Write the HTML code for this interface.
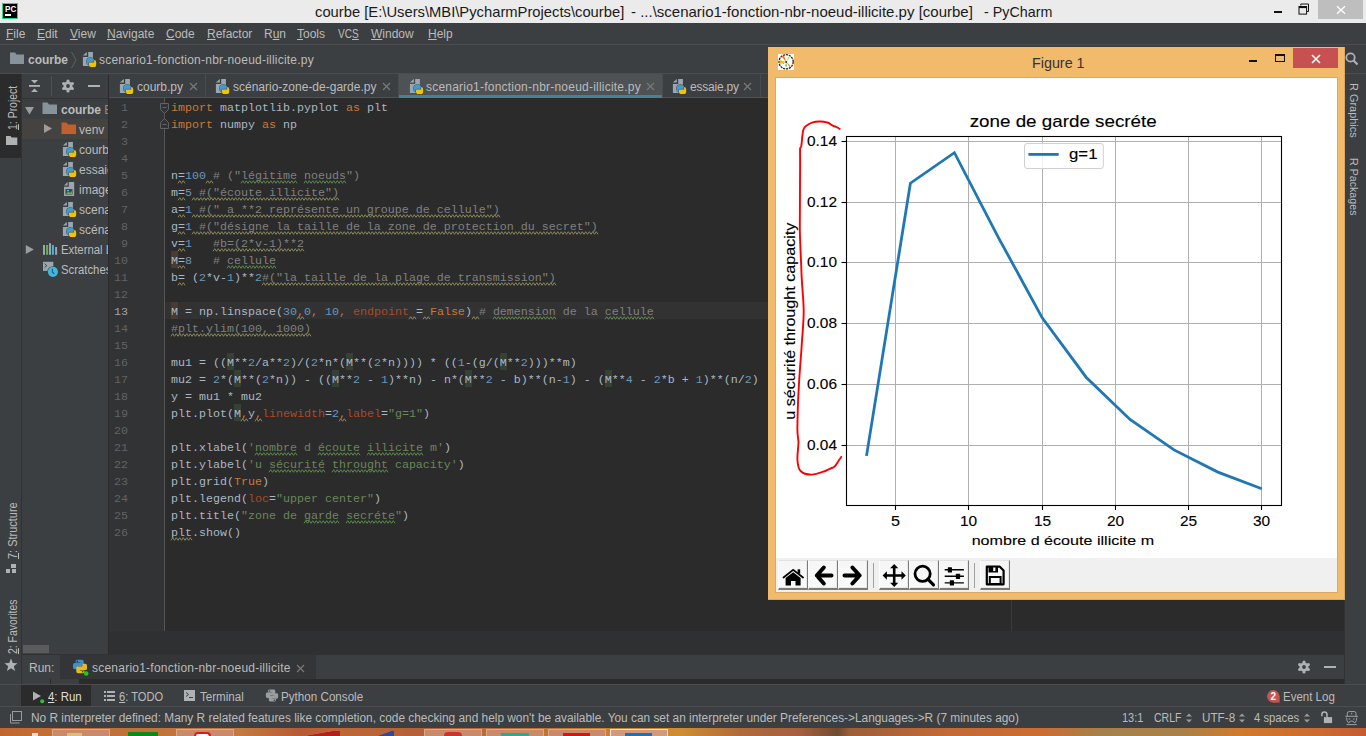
<!DOCTYPE html>
<html><head><meta charset="utf-8">
<style>
*{box-sizing:border-box}
html,body{margin:0;padding:0}
body{width:1366px;height:736px;overflow:hidden;position:relative;background:#3c3f41;font-family:"Liberation Sans",sans-serif;color:#bbbbbb}
.a{position:absolute}
.t{position:absolute;white-space:pre;line-height:16px;font-size:12px}
.u{text-decoration:underline}
#code{position:absolute;left:171px;top:100px;font-family:"Liberation Mono",monospace;font-size:11.667px;line-height:17px;white-space:pre;color:#a9b7c6}
#code div{height:17px}
.k{color:#cc7832}.n{color:#6897bb}.s{color:#6a8759}.c{color:#808080}.p{color:#aa4926}.m{background:#344134}
.w{}
.y{}
#lnum{position:absolute;left:109px;top:100px;width:19px;font-family:"Liberation Mono",monospace;font-size:11.667px;line-height:17px;white-space:pre;color:#606366;text-align:right}
#lnum div{height:17px}
.btn{position:absolute;top:560px;width:30px;height:30px;background:linear-gradient(#f6f6f6,#f9f9f9);border-top:1px solid #e2e2e2;border-left:1px solid #fcfcfc;border-right:1px solid #7a7a7a;border-bottom:2px solid #7a7a7a;box-shadow:inset -1px -1px 0 #e8e8e8}
svg text{font-family:"Liberation Sans",sans-serif;fill:#000}
</style></head><body>

<!-- Title bar -->
<div class="a" style="left:0;top:0;width:1366px;height:23px;background:#ebebeb"></div>
<div class="a" style="left:2px;top:3px;width:16px;height:16px;background:#000;border:1px solid #21d789"></div>
<div class="t" style="left:4.5px;top:4.5px;font-size:9px;font-weight:bold;color:#fff;line-height:9px;transform:scaleX(0.9);transform-origin:0 0">PC</div>
<div class="a" style="left:5px;top:14px;width:6px;height:1.5px;background:#fff"></div>
<div class="t" id="tA" style="left:315px;top:3px;transform:scaleX(0.984);transform-origin:0 0;font-size:15px;line-height:18px;color:#1a1a1a">courbe [E:\Users\MBI\PycharmProjects\courbe]</div>
<div class="t" id="tB" style="left:631px;top:3px;font-size:15px;line-height:18px;color:#1a1a1a">- ...\scenario1-fonction-nbr-noeud-illicite.py [courbe]</div>
<div class="t" id="tC" style="left:983.5px;top:3px;transform:scaleX(0.953);transform-origin:0 0;font-size:15px;line-height:18px;color:#1a1a1a">- PyCharm</div>
<div class="a" style="left:1318px;top:0;width:45px;height:19px;background:#bebebe"></div>
<div class="a" style="left:1274px;top:11px;width:8px;height:2px;background:#111"></div>
<svg class="a" style="left:1298px;top:3px" width="12" height="12"><path d="M2.8 2.5 V1 H10.5 V8.5 H9" fill="none" stroke="#111" stroke-width="1"/><rect x="1" y="3.5" width="7.6" height="7.6" fill="#ebebeb" stroke="#111" stroke-width="1"/><rect x="1" y="3.5" width="7.6" height="1.6" fill="#111"/></svg>
<svg class="a" style="left:1336px;top:5px" width="10" height="10"><path d="M1 1.2L9 8.8M9 1.2L1 8.8" stroke="#fff" stroke-width="1.3"/></svg>

<!-- Menu bar -->
<div class="a" style="left:0;top:23px;width:1366px;height:21px;background:#3c3f41"></div>
<div class="a" style="left:0;top:44px;width:1366px;height:1px;background:#4a4c4e"></div>

<!-- Nav bar -->
<div class="a" style="left:0;top:45px;width:1366px;height:28px;background:#3c3f41"></div>
<div class="a" style="left:0;top:73px;width:1366px;height:1px;background:#4b4d4f"></div>

<!-- left strip -->
<div class="a" style="left:0;top:74px;width:21px;height:610px;background:#3c3f41"></div>
<div class="a" style="left:0;top:74px;width:21px;height:84px;background:#2b2b2b"></div>
<div class="a" style="left:21px;top:74px;width:1px;height:610px;background:#323232"></div>

<!-- Project panel -->
<div class="a" style="left:22px;top:74px;width:86px;height:580px;background:#3c3f41"></div>
<div class="a" style="left:22px;top:98px;width:86px;height:1px;background:#323232"></div>
<div class="a" style="left:22px;top:119px;width:86px;height:20px;background:#45433f"></div>
<div class="a" style="left:108px;top:74px;width:1px;height:580px;background:#2b2b2b"></div>

<!-- Editor tabs -->
<div class="a" style="left:109px;top:74px;width:1257px;height:23px;background:#3c3f41"></div>
<div class="a" style="left:109px;top:97px;width:1257px;height:1px;background:#515151"></div>

<!-- Editor -->
<div class="a" style="left:109px;top:98px;width:1235px;height:533px;background:#2b2b2b"></div>
<div class="a" style="left:109px;top:98px;width:55px;height:533px;background:#313335"></div>
<div class="a" style="left:164px;top:98px;width:1px;height:533px;background:#555555"></div>
<div class="a" style="left:165px;top:302px;width:1179px;height:17px;background:#323232"></div>
<div class="a" style="left:1011px;top:98px;width:1px;height:533px;background:#3b3b3b"></div>
<div class="a" style="left:109px;top:631px;width:1235px;height:24px;background:#2f3031"></div>

<!-- Right strip -->
<div class="a" style="left:1344px;top:74px;width:22px;height:610px;background:#3c3f41"></div>
<div class="a" style="left:1344px;top:74px;width:1px;height:610px;background:#323232"></div>

<!-- Run header -->
<div class="a" style="left:22px;top:655px;width:1322px;height:24px;background:#3c3f41"></div>
<div class="a" style="left:22px;top:679px;width:1322px;height:5px;background:#2b2b2b"></div>

<!-- bottom tool strip -->
<div class="a" style="left:0;top:684px;width:1366px;height:22px;background:#3c3f41"></div>
<div class="a" style="left:0;top:684px;width:1366px;height:1px;background:#4a4c4e"></div>
<div class="a" style="left:21px;top:685px;width:70px;height:21px;background:#2b2b2b"></div>

<!-- status bar -->
<div class="a" style="left:0;top:706px;width:1366px;height:23px;background:#3c3f41"></div>
<div class="a" style="left:0;top:706px;width:1366px;height:1px;background:#4b4d4f"></div>

<!-- taskbar -->
<div class="a" style="left:0;top:728px;width:1366px;height:8px;background:linear-gradient(90deg,#c0652d 0.00%,#c46e34 2.93%,#c07038 8.78%,#c27a40 17.57%,#b85a35 21.96%,#bf6634 24.89%,#b4603a 30.75%,#c27634 41.00%,#cf8d32 49.78%,#b06a3a 54.17%,#a55f40 58.57%,#6e4c30 61.35%,#9c5e3a 62.23%,#c46a36 69.55%,#cc6c30 76.13%,#a6804a 80.53%,#a8804a 86.38%,#d07a2c 90.78%,#cc6a30 96.63%,#c65a30 100.00%)"></div>
<div class="a" style="left:32px;top:733px;width:6px;height:3px;background:#e8e0d8"></div>
<div class="a" style="left:52px;top:729px;width:58px;height:7px;background:#c88a6a;border:1px solid #d8a88a;border-bottom:none"></div>
<div class="a" style="left:67px;top:733px;width:15px;height:3px;background:#d8c070"></div>
<div class="a" style="left:128px;top:732px;width:30px;height:4px;background:#0a8a1a"></div>
<div class="a" style="left:176px;top:729px;width:58px;height:7px;background:#c88a6a;border:1px solid #d8a88a;border-bottom:none"></div>
<div class="a" style="left:194px;top:732px;width:17px;height:4px;border-radius:8px 8px 0 0;background:#fff;border:2px solid #d02020;border-bottom:none"></div>
<div class="a" style="left:308px;top:731px;width:32px;height:5px;background:linear-gradient(170deg,transparent 40%,#b02020 45%)"></div>
<div class="a" style="left:377px;top:731px;width:17px;height:5px;background:linear-gradient(160deg,transparent 45%,#2a4aa0 50%)"></div>
<div class="a" style="left:424px;top:729px;width:58px;height:7px;background:#c88a6a;border:1px solid #d8a88a;border-bottom:none"></div>
<div class="a" style="left:444px;top:732px;width:18px;height:4px;border-radius:9px 9px 0 0;background:#d03030"></div>
<div class="a" style="left:486px;top:729px;width:58px;height:7px;background:#c88a6a;border:1px solid #d8a88a;border-bottom:none"></div>
<div class="a" style="left:501px;top:733px;width:28px;height:3px;background:#20b090"></div>
<div class="a" style="left:548px;top:729px;width:58px;height:7px;background:#c88a6a;border:1px solid #d8a88a;border-bottom:none"></div>
<div class="a" style="left:563px;top:733px;width:27px;height:3px;background:#e01010"></div>
<div class="a" style="left:610px;top:729px;width:58px;height:7px;background:#d09a7e;border:1px solid #f2e6dc;border-bottom:none"></div>
<div class="a" style="left:625px;top:733px;width:27px;height:3px;background:#1a70c8"></div>

<div class="a" style="left:227px;top:353px;width:7px;height:17px;background:#344134"></div>
<div class="a" style="left:346px;top:353px;width:7px;height:17px;background:#344134"></div>
<div class="a" style="left:500px;top:353px;width:7px;height:17px;background:#344134"></div>
<div class="a" style="left:234px;top:370px;width:7px;height:17px;background:#344134"></div>
<div class="a" style="left:332px;top:370px;width:7px;height:17px;background:#344134"></div>
<div class="a" style="left:465px;top:370px;width:7px;height:17px;background:#344134"></div>
<div class="a" style="left:605px;top:370px;width:7px;height:17px;background:#344134"></div>
<div class="a" style="left:234px;top:404px;width:7px;height:17px;background:#344134"></div>
<div class="a" style="left:171px;top:251px;width:7px;height:17px;background:#4b3a2f"></div>
<div class="a" style="left:171px;top:302px;width:7px;height:17px;background:#4b3a2f"></div>
<div id="lnum"><div>1</div><div>2</div><div>3</div><div>4</div><div>5</div><div>6</div><div>7</div><div>8</div><div>9</div><div>10</div><div>11</div><div>12</div><div style="color:#a4a3a3">13</div><div>14</div><div>15</div><div>16</div><div>17</div><div>18</div><div>19</div><div>20</div><div>21</div><div>22</div><div>23</div><div>24</div><div>25</div><div>26</div></div>
<div id="code"><div><span class="k">import</span> matplotlib.pyplot <span class="k">as</span> plt</div><div><span class="k">import</span> numpy <span class="k">as</span> np</div><div></div><div></div><div>n<span class="y">=</span><span class="n">100</span><span class="y"> </span><span class="c"># (&quot;<span class="w">légitime</span> <span class="w">noeuds</span>&quot;)</span></div><div>m<span class="y">=</span><span class="n">5</span><span class="c y"> #(&quot;écoute illicite&quot;)</span></div><div>a<span class="y">=</span><span class="n">1</span><span class="c y"> #(&quot; a **2 représente un groupe de cellule&quot;)</span></div><div>g<span class="y">=</span><span class="n">1</span><span class="c y"> #(&quot;désigne la taille de la zone de protection du secret&quot;)</span></div><div>v<span class="y">=</span><span class="n">1</span>   <span class="c y">#b=(2*v-1)**2</span></div><div>M<span class="y">=</span><span class="n">8</span>   <span class="c"># <span class="w">cellule</span></span></div><div>b<span class="y">=</span> (<span class="n">2</span>*v-<span class="n">1</span>)**<span class="n">2</span><span class="c y">#(&quot;la taille de la plage de transmission&quot;)</span></div><div></div><div>M = np.linspace(<span class="n">30</span><span class="k y">,</span><span class="n">0</span><span class="k">,</span> <span class="n">10</span><span class="k">,</span> <span class="p">endpoint</span><span class="y"> </span>=<span class="y"> </span><span class="k">False</span>)<span class="y"> </span><span class="c"># <span class="w">demension</span> de la <span class="w">cellule</span></span></div><div><span class="c y">#plt.ylim(100, 1000)</span></div><div></div><div>mu1 = ((M**<span class="n">2</span>/a**<span class="n">2</span>)/(<span class="n">2</span>*n*(M**(<span class="n">2</span>*n)))) * ((<span class="n">1</span>-(g/(M**<span class="n">2</span>)))**m)</div><div>mu2 = <span class="n">2</span>*(M**(<span class="n">2</span>*n)) - ((M**<span class="n">2</span> - <span class="n">1</span>)**n) - n*(M**<span class="n">2</span> - b)**(n-<span class="n">1</span>) - (M**<span class="n">4</span> - <span class="n">2</span>*b + <span class="n">1</span>)**(n/<span class="n">2</span>)</div><div>y = mu1 * mu2</div><div>plt.plot(M<span class="k y">,</span>y<span class="k y">,</span><span class="p">linewidth</span>=<span class="n">2</span><span class="k y">,</span><span class="p">label</span>=<span class="s">&quot;g=1&quot;</span>)</div><div></div><div>plt.xlabel(<span class="s">'<span class="w">nombre</span> d <span class="w">écoute</span> <span class="w">illicite</span> m'</span>)</div><div>plt.ylabel(<span class="s">'u <span class="w">sécurité</span> <span class="w">throught</span> capacity'</span>)</div><div>plt.grid(<span class="k">True</span>)</div><div>plt.legend(<span class="p">loc</span>=<span class="s">&quot;upper center&quot;</span>)</div><div>plt.title(<span class="s">&quot;zone de <span class="w">garde</span> <span class="w">secréte</span>&quot;</span>)</div><div><span class="y">plt</span>.show()</div></div>

<svg class="a" style="left:165px;top:98px" width="603" height="450" viewBox="165 98 603 450"><path d="M178 183.3 L179.75 180.7 L181.5 183.3 L183.25 180.7 L185.0 183.3 M178 200.3 L179.75 197.7 L181.5 200.3 L183.25 197.7 L185.0 200.3 M178 217.3 L179.75 214.7 L181.5 217.3 L183.25 214.7 L185.0 217.3 M178 234.3 L179.75 231.7 L181.5 234.3 L183.25 231.7 L185.0 234.3 M178 251.3 L179.75 248.7 L181.5 251.3 L183.25 248.7 L185.0 251.3 M178 268.3 L179.75 265.7 L181.5 268.3 L183.25 265.7 L185.0 268.3 M178 285.3 L179.75 282.7 L181.5 285.3 L183.25 282.7 L185.0 285.3 M206 183.3 L207.75 180.7 L209.5 183.3 L211.25 180.7 L213.0 183.3 M192 200.3 L193.75 197.7 L195.5 200.3 L197.25 197.7 L199.0 200.3 L200.75 197.7 L202.5 200.3 L204.25 197.7 L206.0 200.3 L207.75 197.7 L209.5 200.3 L211.25 197.7 L213.0 200.3 L214.75 197.7 L216.5 200.3 L218.25 197.7 L220.0 200.3 L221.75 197.7 L223.5 200.3 L225.25 197.7 L227.0 200.3 L228.75 197.7 L230.5 200.3 L232.25 197.7 L234.0 200.3 L235.75 197.7 L237.5 200.3 L239.25 197.7 L241.0 200.3 L242.75 197.7 L244.5 200.3 L246.25 197.7 L248.0 200.3 L249.75 197.7 L251.5 200.3 L253.25 197.7 L255.0 200.3 L256.75 197.7 L258.5 200.3 L260.25 197.7 L262.0 200.3 L263.75 197.7 L265.5 200.3 L267.25 197.7 L269.0 200.3 L270.75 197.7 L272.5 200.3 L274.25 197.7 L276.0 200.3 L277.75 197.7 L279.5 200.3 L281.25 197.7 L283.0 200.3 L284.75 197.7 L286.5 200.3 L288.25 197.7 L290.0 200.3 L291.75 197.7 L293.5 200.3 L295.25 197.7 L297.0 200.3 L298.75 197.7 L300.5 200.3 L302.25 197.7 L304.0 200.3 L305.75 197.7 L307.5 200.3 L309.25 197.7 L311.0 200.3 L312.75 197.7 L314.5 200.3 L316.25 197.7 L318.0 200.3 L319.75 197.7 L321.5 200.3 L323.25 197.7 L325.0 200.3 L326.75 197.7 L328.5 200.3 L330.25 197.7 L332.0 200.3 L333.75 197.7 L335.5 200.3 L337.25 197.7 L339.0 200.3 M192 217.3 L193.75 214.7 L195.5 217.3 L197.25 214.7 L199.0 217.3 L200.75 214.7 L202.5 217.3 L204.25 214.7 L206.0 217.3 L207.75 214.7 L209.5 217.3 L211.25 214.7 L213.0 217.3 L214.75 214.7 L216.5 217.3 L218.25 214.7 L220.0 217.3 L221.75 214.7 L223.5 217.3 L225.25 214.7 L227.0 217.3 L228.75 214.7 L230.5 217.3 L232.25 214.7 L234.0 217.3 L235.75 214.7 L237.5 217.3 L239.25 214.7 L241.0 217.3 L242.75 214.7 L244.5 217.3 L246.25 214.7 L248.0 217.3 L249.75 214.7 L251.5 217.3 L253.25 214.7 L255.0 217.3 L256.75 214.7 L258.5 217.3 L260.25 214.7 L262.0 217.3 L263.75 214.7 L265.5 217.3 L267.25 214.7 L269.0 217.3 L270.75 214.7 L272.5 217.3 L274.25 214.7 L276.0 217.3 L277.75 214.7 L279.5 217.3 L281.25 214.7 L283.0 217.3 L284.75 214.7 L286.5 217.3 L288.25 214.7 L290.0 217.3 L291.75 214.7 L293.5 217.3 L295.25 214.7 L297.0 217.3 L298.75 214.7 L300.5 217.3 L302.25 214.7 L304.0 217.3 L305.75 214.7 L307.5 217.3 L309.25 214.7 L311.0 217.3 L312.75 214.7 L314.5 217.3 L316.25 214.7 L318.0 217.3 L319.75 214.7 L321.5 217.3 L323.25 214.7 L325.0 217.3 L326.75 214.7 L328.5 217.3 L330.25 214.7 L332.0 217.3 L333.75 214.7 L335.5 217.3 L337.25 214.7 L339.0 217.3 L340.75 214.7 L342.5 217.3 L344.25 214.7 L346.0 217.3 L347.75 214.7 L349.5 217.3 L351.25 214.7 L353.0 217.3 L354.75 214.7 L356.5 217.3 L358.25 214.7 L360.0 217.3 L361.75 214.7 L363.5 217.3 L365.25 214.7 L367.0 217.3 L368.75 214.7 L370.5 217.3 L372.25 214.7 L374.0 217.3 L375.75 214.7 L377.5 217.3 L379.25 214.7 L381.0 217.3 L382.75 214.7 L384.5 217.3 L386.25 214.7 L388.0 217.3 L389.75 214.7 L391.5 217.3 L393.25 214.7 L395.0 217.3 L396.75 214.7 L398.5 217.3 L400.25 214.7 L402.0 217.3 L403.75 214.7 L405.5 217.3 L407.25 214.7 L409.0 217.3 L410.75 214.7 L412.5 217.3 L414.25 214.7 L416.0 217.3 L417.75 214.7 L419.5 217.3 L421.25 214.7 L423.0 217.3 L424.75 214.7 L426.5 217.3 L428.25 214.7 L430.0 217.3 L431.75 214.7 L433.5 217.3 L435.25 214.7 L437.0 217.3 L438.75 214.7 L440.5 217.3 L442.25 214.7 L444.0 217.3 L445.75 214.7 L447.5 217.3 L449.25 214.7 L451.0 217.3 L452.75 214.7 L454.5 217.3 L456.25 214.7 L458.0 217.3 L459.75 214.7 L461.5 217.3 L463.25 214.7 L465.0 217.3 L466.75 214.7 L468.5 217.3 L470.25 214.7 L472.0 217.3 L473.75 214.7 L475.5 217.3 L477.25 214.7 L479.0 217.3 L480.75 214.7 L482.5 217.3 L484.25 214.7 L486.0 217.3 L487.75 214.7 L489.5 217.3 L491.25 214.7 L493.0 217.3 L494.75 214.7 L496.5 217.3 L498.25 214.7 L500.0 217.3 M192 234.3 L193.75 231.7 L195.5 234.3 L197.25 231.7 L199.0 234.3 L200.75 231.7 L202.5 234.3 L204.25 231.7 L206.0 234.3 L207.75 231.7 L209.5 234.3 L211.25 231.7 L213.0 234.3 L214.75 231.7 L216.5 234.3 L218.25 231.7 L220.0 234.3 L221.75 231.7 L223.5 234.3 L225.25 231.7 L227.0 234.3 L228.75 231.7 L230.5 234.3 L232.25 231.7 L234.0 234.3 L235.75 231.7 L237.5 234.3 L239.25 231.7 L241.0 234.3 L242.75 231.7 L244.5 234.3 L246.25 231.7 L248.0 234.3 L249.75 231.7 L251.5 234.3 L253.25 231.7 L255.0 234.3 L256.75 231.7 L258.5 234.3 L260.25 231.7 L262.0 234.3 L263.75 231.7 L265.5 234.3 L267.25 231.7 L269.0 234.3 L270.75 231.7 L272.5 234.3 L274.25 231.7 L276.0 234.3 L277.75 231.7 L279.5 234.3 L281.25 231.7 L283.0 234.3 L284.75 231.7 L286.5 234.3 L288.25 231.7 L290.0 234.3 L291.75 231.7 L293.5 234.3 L295.25 231.7 L297.0 234.3 L298.75 231.7 L300.5 234.3 L302.25 231.7 L304.0 234.3 L305.75 231.7 L307.5 234.3 L309.25 231.7 L311.0 234.3 L312.75 231.7 L314.5 234.3 L316.25 231.7 L318.0 234.3 L319.75 231.7 L321.5 234.3 L323.25 231.7 L325.0 234.3 L326.75 231.7 L328.5 234.3 L330.25 231.7 L332.0 234.3 L333.75 231.7 L335.5 234.3 L337.25 231.7 L339.0 234.3 L340.75 231.7 L342.5 234.3 L344.25 231.7 L346.0 234.3 L347.75 231.7 L349.5 234.3 L351.25 231.7 L353.0 234.3 L354.75 231.7 L356.5 234.3 L358.25 231.7 L360.0 234.3 L361.75 231.7 L363.5 234.3 L365.25 231.7 L367.0 234.3 L368.75 231.7 L370.5 234.3 L372.25 231.7 L374.0 234.3 L375.75 231.7 L377.5 234.3 L379.25 231.7 L381.0 234.3 L382.75 231.7 L384.5 234.3 L386.25 231.7 L388.0 234.3 L389.75 231.7 L391.5 234.3 L393.25 231.7 L395.0 234.3 L396.75 231.7 L398.5 234.3 L400.25 231.7 L402.0 234.3 L403.75 231.7 L405.5 234.3 L407.25 231.7 L409.0 234.3 L410.75 231.7 L412.5 234.3 L414.25 231.7 L416.0 234.3 L417.75 231.7 L419.5 234.3 L421.25 231.7 L423.0 234.3 L424.75 231.7 L426.5 234.3 L428.25 231.7 L430.0 234.3 L431.75 231.7 L433.5 234.3 L435.25 231.7 L437.0 234.3 L438.75 231.7 L440.5 234.3 L442.25 231.7 L444.0 234.3 L445.75 231.7 L447.5 234.3 L449.25 231.7 L451.0 234.3 L452.75 231.7 L454.5 234.3 L456.25 231.7 L458.0 234.3 L459.75 231.7 L461.5 234.3 L463.25 231.7 L465.0 234.3 L466.75 231.7 L468.5 234.3 L470.25 231.7 L472.0 234.3 L473.75 231.7 L475.5 234.3 L477.25 231.7 L479.0 234.3 L480.75 231.7 L482.5 234.3 L484.25 231.7 L486.0 234.3 L487.75 231.7 L489.5 234.3 L491.25 231.7 L493.0 234.3 L494.75 231.7 L496.5 234.3 L498.25 231.7 L500.0 234.3 L501.75 231.7 L503.5 234.3 L505.25 231.7 L507.0 234.3 L508.75 231.7 L510.5 234.3 L512.25 231.7 L514.0 234.3 L515.75 231.7 L517.5 234.3 L519.25 231.7 L521.0 234.3 L522.75 231.7 L524.5 234.3 L526.25 231.7 L528.0 234.3 L529.75 231.7 L531.5 234.3 L533.25 231.7 L535.0 234.3 L536.75 231.7 L538.5 234.3 L540.25 231.7 L542.0 234.3 L543.75 231.7 L545.5 234.3 L547.25 231.7 L549.0 234.3 L550.75 231.7 L552.5 234.3 L554.25 231.7 L556.0 234.3 L557.75 231.7 L559.5 234.3 L561.25 231.7 L563.0 234.3 L564.75 231.7 L566.5 234.3 L568.25 231.7 L570.0 234.3 L571.75 231.7 L573.5 234.3 L575.25 231.7 L577.0 234.3 L578.75 231.7 L580.5 234.3 L582.25 231.7 L584.0 234.3 L585.75 231.7 L587.5 234.3 L589.25 231.7 L591.0 234.3 L592.75 231.7 L594.5 234.3 L596.25 231.7 L598.0 234.3 M213 251.3 L214.75 248.7 L216.5 251.3 L218.25 248.7 L220.0 251.3 L221.75 248.7 L223.5 251.3 L225.25 248.7 L227.0 251.3 L228.75 248.7 L230.5 251.3 L232.25 248.7 L234.0 251.3 L235.75 248.7 L237.5 251.3 L239.25 248.7 L241.0 251.3 L242.75 248.7 L244.5 251.3 L246.25 248.7 L248.0 251.3 L249.75 248.7 L251.5 251.3 L253.25 248.7 L255.0 251.3 L256.75 248.7 L258.5 251.3 L260.25 248.7 L262.0 251.3 L263.75 248.7 L265.5 251.3 L267.25 248.7 L269.0 251.3 L270.75 248.7 L272.5 251.3 L274.25 248.7 L276.0 251.3 L277.75 248.7 L279.5 251.3 L281.25 248.7 L283.0 251.3 L284.75 248.7 L286.5 251.3 L288.25 248.7 L290.0 251.3 L291.75 248.7 L293.5 251.3 L295.25 248.7 L297.0 251.3 L298.75 248.7 L300.5 251.3 L302.25 248.7 L304.0 251.3 M262 285.3 L263.75 282.7 L265.5 285.3 L267.25 282.7 L269.0 285.3 L270.75 282.7 L272.5 285.3 L274.25 282.7 L276.0 285.3 L277.75 282.7 L279.5 285.3 L281.25 282.7 L283.0 285.3 L284.75 282.7 L286.5 285.3 L288.25 282.7 L290.0 285.3 L291.75 282.7 L293.5 285.3 L295.25 282.7 L297.0 285.3 L298.75 282.7 L300.5 285.3 L302.25 282.7 L304.0 285.3 L305.75 282.7 L307.5 285.3 L309.25 282.7 L311.0 285.3 L312.75 282.7 L314.5 285.3 L316.25 282.7 L318.0 285.3 L319.75 282.7 L321.5 285.3 L323.25 282.7 L325.0 285.3 L326.75 282.7 L328.5 285.3 L330.25 282.7 L332.0 285.3 L333.75 282.7 L335.5 285.3 L337.25 282.7 L339.0 285.3 L340.75 282.7 L342.5 285.3 L344.25 282.7 L346.0 285.3 L347.75 282.7 L349.5 285.3 L351.25 282.7 L353.0 285.3 L354.75 282.7 L356.5 285.3 L358.25 282.7 L360.0 285.3 L361.75 282.7 L363.5 285.3 L365.25 282.7 L367.0 285.3 L368.75 282.7 L370.5 285.3 L372.25 282.7 L374.0 285.3 L375.75 282.7 L377.5 285.3 L379.25 282.7 L381.0 285.3 L382.75 282.7 L384.5 285.3 L386.25 282.7 L388.0 285.3 L389.75 282.7 L391.5 285.3 L393.25 282.7 L395.0 285.3 L396.75 282.7 L398.5 285.3 L400.25 282.7 L402.0 285.3 L403.75 282.7 L405.5 285.3 L407.25 282.7 L409.0 285.3 L410.75 282.7 L412.5 285.3 L414.25 282.7 L416.0 285.3 L417.75 282.7 L419.5 285.3 L421.25 282.7 L423.0 285.3 L424.75 282.7 L426.5 285.3 L428.25 282.7 L430.0 285.3 L431.75 282.7 L433.5 285.3 L435.25 282.7 L437.0 285.3 L438.75 282.7 L440.5 285.3 L442.25 282.7 L444.0 285.3 L445.75 282.7 L447.5 285.3 L449.25 282.7 L451.0 285.3 L452.75 282.7 L454.5 285.3 L456.25 282.7 L458.0 285.3 L459.75 282.7 L461.5 285.3 L463.25 282.7 L465.0 285.3 L466.75 282.7 L468.5 285.3 L470.25 282.7 L472.0 285.3 L473.75 282.7 L475.5 285.3 L477.25 282.7 L479.0 285.3 L480.75 282.7 L482.5 285.3 L484.25 282.7 L486.0 285.3 L487.75 282.7 L489.5 285.3 L491.25 282.7 L493.0 285.3 L494.75 282.7 L496.5 285.3 L498.25 282.7 L500.0 285.3 L501.75 282.7 L503.5 285.3 L505.25 282.7 L507.0 285.3 L508.75 282.7 L510.5 285.3 L512.25 282.7 L514.0 285.3 L515.75 282.7 L517.5 285.3 L519.25 282.7 L521.0 285.3 L522.75 282.7 L524.5 285.3 L526.25 282.7 L528.0 285.3 L529.75 282.7 L531.5 285.3 L533.25 282.7 L535.0 285.3 L536.75 282.7 L538.5 285.3 L540.25 282.7 L542.0 285.3 L543.75 282.7 L545.5 285.3 L547.25 282.7 L549.0 285.3 L550.75 282.7 L552.5 285.3 L554.25 282.7 L556.0 285.3 M297 319.3 L298.75 316.7 L300.5 319.3 L302.25 316.7 L304.0 319.3 M409 319.3 L410.75 316.7 L412.5 319.3 L414.25 316.7 L416.0 319.3 M423 319.3 L424.75 316.7 L426.5 319.3 L428.25 316.7 L430.0 319.3 M472 319.3 L473.75 316.7 L475.5 319.3 L477.25 316.7 L479.0 319.3 M171 336.3 L172.75 333.7 L174.5 336.3 L176.25 333.7 L178.0 336.3 L179.75 333.7 L181.5 336.3 L183.25 333.7 L185.0 336.3 L186.75 333.7 L188.5 336.3 L190.25 333.7 L192.0 336.3 L193.75 333.7 L195.5 336.3 L197.25 333.7 L199.0 336.3 L200.75 333.7 L202.5 336.3 L204.25 333.7 L206.0 336.3 L207.75 333.7 L209.5 336.3 L211.25 333.7 L213.0 336.3 L214.75 333.7 L216.5 336.3 L218.25 333.7 L220.0 336.3 L221.75 333.7 L223.5 336.3 L225.25 333.7 L227.0 336.3 L228.75 333.7 L230.5 336.3 L232.25 333.7 L234.0 336.3 L235.75 333.7 L237.5 336.3 L239.25 333.7 L241.0 336.3 L242.75 333.7 L244.5 336.3 L246.25 333.7 L248.0 336.3 L249.75 333.7 L251.5 336.3 L253.25 333.7 L255.0 336.3 L256.75 333.7 L258.5 336.3 L260.25 333.7 L262.0 336.3 L263.75 333.7 L265.5 336.3 L267.25 333.7 L269.0 336.3 L270.75 333.7 L272.5 336.3 L274.25 333.7 L276.0 336.3 L277.75 333.7 L279.5 336.3 L281.25 333.7 L283.0 336.3 L284.75 333.7 L286.5 336.3 L288.25 333.7 L290.0 336.3 L291.75 333.7 L293.5 336.3 L295.25 333.7 L297.0 336.3 L298.75 333.7 L300.5 336.3 L302.25 333.7 L304.0 336.3 L305.75 333.7 L307.5 336.3 L309.25 333.7 L311.0 336.3 M241 421.3 L242.75 418.7 L244.5 421.3 L246.25 418.7 L248.0 421.3 M255 421.3 L256.75 418.7 L258.5 421.3 L260.25 418.7 L262.0 421.3 M339 421.3 L340.75 418.7 L342.5 421.3 L344.25 418.7 L346.0 421.3 M171 540.3 L172.75 537.7 L174.5 540.3 L176.25 537.7 L178.0 540.3 L179.75 537.7 L181.5 540.3 L183.25 537.7 L185.0 540.3 L186.75 537.7 L188.5 540.3 L190.25 537.7 L192.0 540.3" fill="none" stroke="#8a8a5c" stroke-width="1"/><path d="M241 183.3 L242.75 180.7 L244.5 183.3 L246.25 180.7 L248.0 183.3 L249.75 180.7 L251.5 183.3 L253.25 180.7 L255.0 183.3 L256.75 180.7 L258.5 183.3 L260.25 180.7 L262.0 183.3 L263.75 180.7 L265.5 183.3 L267.25 180.7 L269.0 183.3 L270.75 180.7 L272.5 183.3 L274.25 180.7 L276.0 183.3 L277.75 180.7 L279.5 183.3 L281.25 180.7 L283.0 183.3 L284.75 180.7 L286.5 183.3 L288.25 180.7 L290.0 183.3 L291.75 180.7 L293.5 183.3 L295.25 180.7 L297.0 183.3 M304 183.3 L305.75 180.7 L307.5 183.3 L309.25 180.7 L311.0 183.3 L312.75 180.7 L314.5 183.3 L316.25 180.7 L318.0 183.3 L319.75 180.7 L321.5 183.3 L323.25 180.7 L325.0 183.3 L326.75 180.7 L328.5 183.3 L330.25 180.7 L332.0 183.3 L333.75 180.7 L335.5 183.3 L337.25 180.7 L339.0 183.3 L340.75 180.7 L342.5 183.3 L344.25 180.7 L346.0 183.3 M227 268.3 L228.75 265.7 L230.5 268.3 L232.25 265.7 L234.0 268.3 L235.75 265.7 L237.5 268.3 L239.25 265.7 L241.0 268.3 L242.75 265.7 L244.5 268.3 L246.25 265.7 L248.0 268.3 L249.75 265.7 L251.5 268.3 L253.25 265.7 L255.0 268.3 L256.75 265.7 L258.5 268.3 L260.25 265.7 L262.0 268.3 L263.75 265.7 L265.5 268.3 L267.25 265.7 L269.0 268.3 L270.75 265.7 L272.5 268.3 L274.25 265.7 L276.0 268.3 M493 319.3 L494.75 316.7 L496.5 319.3 L498.25 316.7 L500.0 319.3 L501.75 316.7 L503.5 319.3 L505.25 316.7 L507.0 319.3 L508.75 316.7 L510.5 319.3 L512.25 316.7 L514.0 319.3 L515.75 316.7 L517.5 319.3 L519.25 316.7 L521.0 319.3 L522.75 316.7 L524.5 319.3 L526.25 316.7 L528.0 319.3 L529.75 316.7 L531.5 319.3 L533.25 316.7 L535.0 319.3 L536.75 316.7 L538.5 319.3 L540.25 316.7 L542.0 319.3 L543.75 316.7 L545.5 319.3 L547.25 316.7 L549.0 319.3 L550.75 316.7 L552.5 319.3 L554.25 316.7 L556.0 319.3 M605 319.3 L606.75 316.7 L608.5 319.3 L610.25 316.7 L612.0 319.3 L613.75 316.7 L615.5 319.3 L617.25 316.7 L619.0 319.3 L620.75 316.7 L622.5 319.3 L624.25 316.7 L626.0 319.3 L627.75 316.7 L629.5 319.3 L631.25 316.7 L633.0 319.3 L634.75 316.7 L636.5 319.3 L638.25 316.7 L640.0 319.3 L641.75 316.7 L643.5 319.3 L645.25 316.7 L647.0 319.3 L648.75 316.7 L650.5 319.3 L652.25 316.7 L654.0 319.3 M255 455.3 L256.75 452.7 L258.5 455.3 L260.25 452.7 L262.0 455.3 L263.75 452.7 L265.5 455.3 L267.25 452.7 L269.0 455.3 L270.75 452.7 L272.5 455.3 L274.25 452.7 L276.0 455.3 L277.75 452.7 L279.5 455.3 L281.25 452.7 L283.0 455.3 L284.75 452.7 L286.5 455.3 L288.25 452.7 L290.0 455.3 L291.75 452.7 L293.5 455.3 L295.25 452.7 L297.0 455.3 M318 455.3 L319.75 452.7 L321.5 455.3 L323.25 452.7 L325.0 455.3 L326.75 452.7 L328.5 455.3 L330.25 452.7 L332.0 455.3 L333.75 452.7 L335.5 455.3 L337.25 452.7 L339.0 455.3 L340.75 452.7 L342.5 455.3 L344.25 452.7 L346.0 455.3 L347.75 452.7 L349.5 455.3 L351.25 452.7 L353.0 455.3 L354.75 452.7 L356.5 455.3 L358.25 452.7 L360.0 455.3 M367 455.3 L368.75 452.7 L370.5 455.3 L372.25 452.7 L374.0 455.3 L375.75 452.7 L377.5 455.3 L379.25 452.7 L381.0 455.3 L382.75 452.7 L384.5 455.3 L386.25 452.7 L388.0 455.3 L389.75 452.7 L391.5 455.3 L393.25 452.7 L395.0 455.3 L396.75 452.7 L398.5 455.3 L400.25 452.7 L402.0 455.3 L403.75 452.7 L405.5 455.3 L407.25 452.7 L409.0 455.3 L410.75 452.7 L412.5 455.3 L414.25 452.7 L416.0 455.3 L417.75 452.7 L419.5 455.3 L421.25 452.7 L423.0 455.3 M269 472.3 L270.75 469.7 L272.5 472.3 L274.25 469.7 L276.0 472.3 L277.75 469.7 L279.5 472.3 L281.25 469.7 L283.0 472.3 L284.75 469.7 L286.5 472.3 L288.25 469.7 L290.0 472.3 L291.75 469.7 L293.5 472.3 L295.25 469.7 L297.0 472.3 L298.75 469.7 L300.5 472.3 L302.25 469.7 L304.0 472.3 L305.75 469.7 L307.5 472.3 L309.25 469.7 L311.0 472.3 L312.75 469.7 L314.5 472.3 L316.25 469.7 L318.0 472.3 L319.75 469.7 L321.5 472.3 L323.25 469.7 L325.0 472.3 M332 472.3 L333.75 469.7 L335.5 472.3 L337.25 469.7 L339.0 472.3 L340.75 469.7 L342.5 472.3 L344.25 469.7 L346.0 472.3 L347.75 469.7 L349.5 472.3 L351.25 469.7 L353.0 472.3 L354.75 469.7 L356.5 472.3 L358.25 469.7 L360.0 472.3 L361.75 469.7 L363.5 472.3 L365.25 469.7 L367.0 472.3 L368.75 469.7 L370.5 472.3 L372.25 469.7 L374.0 472.3 L375.75 469.7 L377.5 472.3 L379.25 469.7 L381.0 472.3 L382.75 469.7 L384.5 472.3 L386.25 469.7 L388.0 472.3 M304 523.3 L305.75 520.7 L307.5 523.3 L309.25 520.7 L311.0 523.3 L312.75 520.7 L314.5 523.3 L316.25 520.7 L318.0 523.3 L319.75 520.7 L321.5 523.3 L323.25 520.7 L325.0 523.3 L326.75 520.7 L328.5 523.3 L330.25 520.7 L332.0 523.3 L333.75 520.7 L335.5 523.3 L337.25 520.7 L339.0 523.3 M346 523.3 L347.75 520.7 L349.5 523.3 L351.25 520.7 L353.0 523.3 L354.75 520.7 L356.5 523.3 L358.25 520.7 L360.0 523.3 L361.75 520.7 L363.5 523.3 L365.25 520.7 L367.0 523.3 L368.75 520.7 L370.5 523.3 L372.25 520.7 L374.0 523.3 L375.75 520.7 L377.5 523.3 L379.25 520.7 L381.0 523.3 L382.75 520.7 L384.5 523.3 L386.25 520.7 L388.0 523.3 L389.75 520.7 L391.5 523.3 L393.25 520.7 L395.0 523.3" fill="none" stroke="#5e8a4c" stroke-width="1"/></svg><svg width="0" height="0" style="position:absolute">
<defs>
<symbol id="pyf" viewBox="0 0 16 16">
<path d="M0.9 4.6 L4.8 0.9 V4.6 Z" fill="#9aa7b0"/>
<path d="M6.2 0.9 H10.9 V14.9 H0.9 V6 H6.2 Z" fill="#9aa7b0"/>
<g stroke="#33363a" stroke-width="0.8" paint-order="stroke">
<rect x="4.7" y="6.9" width="7.4" height="7.1" rx="2.6" fill="#3e9bd6"/>
<path d="M7 11.4 H12.1 V9 Q14.2 9 14.2 11.2 V14 Q14.2 16.1 12.1 16.1 H9.1 Q7 16.1 7 14 Z" fill="#f3c200"/>
</g>
</symbol>
<symbol id="py" viewBox="0 0 16 16"><path d="M5 0.7 H10 Q11.7 0.7 11.7 2.4 V6.2 Q11.7 7.4 10.5 7.4 H6.6 Q5.4 7.4 5.4 8.6 V10.2 H2.6 Q1 10.2 1 8.6 V5.6 Q1 4 2.6 4 H8.2 V3.6 H3.5 V2.4 Q3.5 0.7 5 0.7 Z" fill="#3f8fc8"/><path d="M5 0.7 H10 Q11.7 0.7 11.7 2.4 V6.2 Q11.7 7.4 10.5 7.4 H6.6 Q5.4 7.4 5.4 8.6 V10.2 H2.6 Q1 10.2 1 8.6 V5.6 Q1 4 2.6 4 H8.2 V3.6 H3.5 V2.4 Q3.5 0.7 5 0.7 Z" fill="#e8b920" transform="rotate(180 8 7.5)"/><circle cx="5.3" cy="2.2" r="0.7" fill="#2b2b2b"/><circle cx="10.7" cy="12.8" r="0.7" fill="#2b2b2b"/></symbol>
<symbol id="gear" viewBox="0 0 16 16"><g fill="#afb1b3"><circle cx="8" cy="8" r="4.6"/><circle cx="8.00" cy="3.00" r="1.6"/><circle cx="3.67" cy="5.50" r="1.6"/><circle cx="3.67" cy="10.50" r="1.6"/><circle cx="8.00" cy="13.00" r="1.6"/><circle cx="12.33" cy="10.50" r="1.6"/><circle cx="12.33" cy="5.50" r="1.6"/></g><circle cx="8" cy="8" r="1.9" fill="#3c3f41"/></symbol>
</defs>
</svg>

<!-- menu -->
<div class="t" style="left:6px;top:26px"><span class="u">F</span>ile</div>
<div class="t" style="left:37px;top:26px"><span class="u">E</span>dit</div>
<div class="t" style="left:70px;top:26px"><span class="u">V</span>iew</div>
<div class="t" style="left:107px;top:26px"><span class="u">N</span>avigate</div>
<div class="t" style="left:166px;top:26px"><span class="u">C</span>ode</div>
<div class="t" style="left:207px;top:26px"><span class="u">R</span>efactor</div>
<div class="t" style="left:264px;top:26px">R<span class="u">u</span>n</div>
<div class="t" style="left:297px;top:26px"><span class="u">T</span>ools</div>
<div class="t" style="left:338px;top:26px;transform:scaleX(0.84);transform-origin:0 0">VC<span class="u">S</span></div>
<div class="t" style="left:371px;top:26px"><span class="u">W</span>indow</div>
<div class="t" style="left:428px;top:26px"><span class="u">H</span>elp</div>

<!-- nav bar -->
<svg class="a" style="left:9px;top:52px" width="16" height="14"><path d="M1 0.5h5l1.5 2H15V12H1z" fill="#87939a"/></svg>
<div class="t" style="left:28px;top:52px;font-weight:bold">courbe</div>
<svg class="a" style="left:70px;top:51px" width="8" height="18"><path d="M1.5 1 L6 9 L1.5 17" stroke="#5f6367" fill="none"/></svg>
<svg class="a" style="left:82px;top:51px" width="16" height="16"><use href="#pyf"/></svg>
<div class="t" style="left:99px;top:52px;letter-spacing:0.22px">scenario1-fonction-nbr-noeud-illicite.py</div>
<svg class="a" style="left:1345px;top:52px" width="14" height="14"><circle cx="5.5" cy="5.5" r="4.2" stroke="#afb1b3" stroke-width="1.8" fill="none"/><path d="M8.5 8.5 L12.5 12.5" stroke="#afb1b3" stroke-width="2.2"/></svg>
<div class="a" style="left:1345px;top:73px;width:21px;height:1px;background:#4b4d4f"></div>

<!-- left strip texts -->
<div class="t" style="left:5px;top:130px;transform:rotate(-90deg) scaleX(0.872);transform-origin:0 0;color:#bbbbbb"><span class="u">1</span>: Project</div>
<svg class="a" style="left:6px;top:136px" width="12" height="10"><path d="M0 0h4.5l1.2 1.6H11.3V9H0z" fill="#afb1b3"/></svg>
<div class="t" style="left:5px;top:559px;transform:rotate(-90deg) scaleX(0.913);transform-origin:0 0"><span class="u">7</span>: Structure</div>
<svg class="a" style="left:6px;top:564px" width="12" height="10"><rect x="5" y="0" width="5" height="4" fill="#afb1b3"/><rect x="0" y="5" width="4" height="4" fill="#afb1b3"/><rect x="6" y="5" width="4" height="4" fill="#afb1b3"/></svg>
<div class="t" style="left:5px;top:654px;transform:rotate(-90deg) scaleX(0.869);transform-origin:0 0"><span class="u">2</span>: Favorites</div>
<svg class="a" style="left:4px;top:658px" width="14" height="14"><path d="M7 0.5 L8.8 5 L13.5 5.2 L9.8 8.2 L11.1 13 L7 10.3 L2.9 13 L4.2 8.2 L0.5 5.2 L5.2 5 Z" fill="#afb1b3"/></svg>

<!-- right strip texts -->
<div class="t" style="left:1362px;top:83px;transform:rotate(90deg) scaleX(0.95);transform-origin:0 0;font-size:11.5px">R Graphics</div>
<div class="t" style="left:1362px;top:158px;transform:rotate(90deg) scaleX(0.927);transform-origin:0 0;font-size:11.5px">R Packages</div>

<!-- project toolbar -->
<svg class="a" style="left:28px;top:79px" width="14" height="14"><path d="M3 1h7L6.5 4.5z M3 13h7L6.5 9.5z" fill="#afb1b3"/><rect x="1" y="6" width="11" height="1.8" fill="#afb1b3"/></svg>
<div class="a" style="left:51px;top:76px;width:1px;height:20px;background:#515151"></div>
<svg class="a" style="left:60px;top:78px" width="16" height="16"><use href="#gear" width="16" height="16"/></svg>
<div class="a" style="left:88px;top:85px;width:12px;height:2px;background:#afb1b3"></div>

<!-- project tree -->
<div class="a" style="left:22px;top:99px;width:86px;height:200px;overflow:hidden">
<svg class="a" style="left:2px;top:7px" width="12" height="10"><path d="M1 1h9L5.5 8.5z" fill="#9c9c9c"/></svg>
<svg class="a" style="left:20px;top:3px" width="16" height="13"><path d="M0.5 0.5h5l1.5 2H15v9.5H0.5z" fill="#87939a"/></svg>
<div class="t" style="left:39px;top:3px;font-weight:bold">courbe <span style="font-weight:normal;color:#8c8c8c">E:\Users\MBI</span></div>
<svg class="a" style="left:21px;top:24px" width="10" height="12"><path d="M1 1L9 5.5L1 10z" fill="#9c9c9c"/></svg>
<svg class="a" style="left:39px;top:23px" width="16" height="13"><path d="M0.5 0.5h5l1.5 2H15v9.5H0.5z" fill="#c25f2e"/></svg>
<div class="t" style="left:57px;top:23px">venv</div>
<svg class="a" style="left:40px;top:42px" width="16" height="16"><use href="#pyf"/></svg>
<div class="t" style="left:57px;top:43px">courb.py</div>
<svg class="a" style="left:40px;top:62px" width="16" height="16"><use href="#pyf"/></svg>
<div class="t" style="left:57px;top:63px">essaie.py</div>
<svg class="a" style="left:40px;top:82px" width="16" height="16"><path d="M2 4.6 L5.6 1 V4.6 Z M6.8 1 H12.2 V15 H2 V5.8 H6.8 Z" fill="#9aa7b0"/><rect x="3.5" y="8" width="7" height="5.5" fill="#3b4a3e"/><path d="M4 13 L6.5 10.5 L8 12 L10 10 V13 Z" fill="#62b543"/><rect x="5" y="9" width="2" height="1.3" fill="#40b6e0"/></svg>
<div class="t" style="left:57px;top:83px">image.png</div>
<svg class="a" style="left:40px;top:102px" width="16" height="16"><use href="#pyf"/></svg>
<div class="t" style="left:57px;top:103px">scenario1-fonction-nbr-noeud-illicite.py</div>
<svg class="a" style="left:40px;top:122px" width="16" height="16"><use href="#pyf"/></svg>
<div class="t" style="left:57px;top:123px">scénario-zone-de-garde.py</div>
<svg class="a" style="left:3px;top:145px" width="10" height="12"><path d="M0.8 1L8.8 5.5L0.8 10z" fill="#9c9c9c"/></svg>
<svg class="a" style="left:20px;top:143px" width="16" height="14"><rect x="1" y="3" width="2" height="9.8" fill="#9aa7b0"/><rect x="4.1" y="3" width="2" height="9.8" fill="#62b543"/><rect x="7" y="1.2" width="2" height="11.6" fill="#9aa7b0"/><rect x="9.9" y="3" width="2" height="9.8" fill="#40b6e0"/><rect x="13.1" y="5" width="2" height="7.8" fill="#9aa7b0"/></svg>
<div class="t" style="left:39px;top:143px;transform:scaleX(0.944);transform-origin:0 0">External Libraries</div>
<svg class="a" style="left:20px;top:162px" width="18" height="18"><rect x="1" y="0.8" width="10.3" height="9.1" fill="#9aa7b0"/><path d="M2.6 2.6 l2.2 2 l-2.2 2" stroke="#3c3f41" stroke-width="1" fill="none"/><circle cx="10.9" cy="10.8" r="5.6" fill="#3c3f41"/><circle cx="10.9" cy="10.8" r="5.1" fill="#40b6e0"/><path d="M10.4 7.8v3.4l2 1.6" stroke="#2b5b70" stroke-width="1.1" fill="none"/></svg>
<div class="t" style="left:39px;top:163px;transform:scaleX(0.944);transform-origin:0 0">Scratches and Consoles</div>
</div>

<!-- editor tabs -->
<div class="a" style="left:205px;top:74px;width:1px;height:23px;background:#4b4b4b"></div>
<div class="a" style="left:398px;top:74px;width:1px;height:23px;background:#4b4b4b"></div>
<div class="a" style="left:399px;top:74px;width:263px;height:23px;background:#4e5254"></div>
<div class="a" style="left:399px;top:95px;width:263px;height:3px;background:#4a7f94"></div>
<div class="a" style="left:662px;top:74px;width:1px;height:23px;background:#4b4b4b"></div>
<div class="a" style="left:760px;top:74px;width:1px;height:23px;background:#4b4b4b"></div>
<svg class="a" style="left:119px;top:78px" width="16" height="16"><use href="#pyf"/></svg>
<div class="t" style="left:137px;top:79px">courb.py</div>
<svg class="a" style="left:189px;top:82px" width="9" height="9"><path d="M1 1L8 8M8 1L1 8" stroke="#77797b" stroke-width="1.2"/></svg>
<svg class="a" style="left:215px;top:78px" width="16" height="16"><use href="#pyf"/></svg>
<div class="t" style="left:233px;top:79px">scénario-zone-de-garde.py</div>
<svg class="a" style="left:382px;top:82px" width="9" height="9"><path d="M1 1L8 8M8 1L1 8" stroke="#77797b" stroke-width="1.2"/></svg>
<svg class="a" style="left:409px;top:78px" width="16" height="16"><use href="#pyf"/></svg>
<div class="t" style="left:426px;top:79px;letter-spacing:0.22px">scenario1-fonction-nbr-noeud-illicite.py</div>
<svg class="a" style="left:646px;top:82px" width="9" height="9"><path d="M1 1L8 8M8 1L1 8" stroke="#77797b" stroke-width="1.2"/></svg>
<svg class="a" style="left:672px;top:78px" width="16" height="16"><use href="#pyf"/></svg>
<div class="t" style="left:690px;top:79px;letter-spacing:-0.2px">essaie.py</div>
<svg class="a" style="left:743px;top:82px" width="9" height="9"><path d="M1 1L8 8M8 1L1 8" stroke="#77797b" stroke-width="1.2"/></svg>

<!-- fold markers -->
<svg class="a" style="left:159px;top:102px" width="11" height="28"><path d="M1.5 1.5h8v6l-4 4l-4-4z" stroke="#606366" fill="#313335"/><path d="M3.5 5.5h4" stroke="#606366"/><path d="M1.5 26.5h8v-6l-4-4l-4 4z" stroke="#606366" fill="#313335"/><path d="M3.5 22.5h4" stroke="#606366"/></svg>

<!-- run header -->
<div class="a" style="left:22px;top:679px;width:57px;height:5px;background:#3c3f41"></div><div class="a" style="left:50px;top:679px;width:1px;height:5px;background:#2b2b2b"></div>
<div class="a" style="left:23px;top:645px;width:26px;height:8px;background:#595b5d"></div>
<div class="a" style="left:22px;top:654px;width:1322px;height:1px;background:#323232"></div>
<div class="a" style="left:60px;top:655px;width:1px;height:24px;background:#333537"></div>
<div class="a" style="left:61px;top:655px;width:255px;height:24px;background:#333537"></div>
<div class="a" style="left:22px;top:655px;width:38px;height:24px;background:#3c3f41"></div>

<div class="t" style="left:29px;top:660px">Run:</div>
<svg class="a" style="left:72px;top:659px" width="18" height="18"><use href="#py" width="16" height="16"/><circle cx="14.2" cy="14.5" r="2.3" fill="#18d018"/></svg>
<div class="t" style="left:92px;top:660px;letter-spacing:0.23px">scenario1-fonction-nbr-noeud-illicite</div>
<svg class="a" style="left:296px;top:664px" width="9" height="9"><path d="M1 1L8 8M8 1L1 8" stroke="#77797b" stroke-width="1.2"/></svg>
<svg class="a" style="left:1296px;top:659px" width="16" height="16"><use href="#gear" width="16" height="16"/></svg>
<div class="a" style="left:1324px;top:666px;width:12px;height:2px;background:#afb1b3"></div>

<!-- bottom tool strip -->
<svg class="a" style="left:32px;top:691px" width="14" height="14"><path d="M1 0.5 L9 5 L1 9.5z" fill="#afb1b3"/><circle cx="10.2" cy="10.2" r="2" fill="#1fd21f"/></svg>
<div class="t" style="left:48px;top:689px;color:#dddddd;transform:scaleX(0.953);transform-origin:0 0"><span class="u">4</span>: Run</div>
<svg class="a" style="left:104px;top:691px" width="11" height="10"><g fill="#afb1b3"><rect x="0" y="0" width="2" height="2"/><rect x="3" y="0" width="8" height="2"/><rect x="0" y="4" width="2" height="2"/><rect x="3" y="4" width="8" height="2"/><rect x="0" y="8" width="2" height="2"/><rect x="3" y="8" width="8" height="2"/></g></svg>
<div class="t" style="left:119px;top:689px;transform:scaleX(0.926);transform-origin:0 0"><span class="u">6</span>: TODO</div>
<svg class="a" style="left:184px;top:690px" width="11" height="11"><rect x="0" y="0" width="11" height="11" fill="#afb1b3"/><path d="M2 2.5 L4.5 4.5 L2 6.5" stroke="#3c3f41" fill="none"/><rect x="5" y="7" width="4" height="1" fill="#3c3f41"/></svg>
<div class="t" style="left:200px;top:689px;transform:scaleX(0.966);transform-origin:0 0">Terminal</div>
<svg class="a" style="left:265px;top:689px" width="14" height="14" viewBox="0 0 16 16"><path d="M5 0.7 H10 Q11.7 0.7 11.7 2.4 V6.2 Q11.7 7.4 10.5 7.4 H6.6 Q5.4 7.4 5.4 8.6 V10.2 H2.6 Q1 10.2 1 8.6 V5.6 Q1 4 2.6 4 H8.2 V3.6 H3.5 V2.4 Q3.5 0.7 5 0.7 Z" fill="#9a9c9e"/><path d="M5 0.7 H10 Q11.7 0.7 11.7 2.4 V6.2 Q11.7 7.4 10.5 7.4 H6.6 Q5.4 7.4 5.4 8.6 V10.2 H2.6 Q1 10.2 1 8.6 V5.6 Q1 4 2.6 4 H8.2 V3.6 H3.5 V2.4 Q3.5 0.7 5 0.7 Z" fill="#9a9c9e" transform="rotate(180 8 7.5)"/><circle cx="5.3" cy="2.2" r="0.8" fill="#3c3f41"/><circle cx="10.7" cy="12.8" r="0.8" fill="#3c3f41"/></svg>
<div class="t" style="left:281px;top:689px;transform:scaleX(0.97);transform-origin:0 0">Python Console</div>
<svg class="a" style="left:1267px;top:690px" width="14" height="14"><circle cx="6.3" cy="6.3" r="6.2" fill="#c75450"/><rect x="6.3" y="6.3" width="6.3" height="6.3" fill="#c75450"/><text x="6.3" y="10.4" font-size="10" text-anchor="middle" style="fill:#ffffff" font-family="Liberation Sans" font-weight="bold">2</text></svg>
<div class="t" style="left:1283px;top:689px;transform:scaleX(0.958);transform-origin:0 0">Event Log</div>

<!-- status bar -->
<svg class="a" style="left:9px;top:711px" width="14" height="14"><rect x="3.5" y="0.5" width="9" height="9" stroke="#9a9a9a" fill="none"/><path d="M1.5 3 V12 H10.5" stroke="#9a9a9a" fill="none"/></svg>
<div class="t" style="left:31px;top:710px;transform:scaleX(0.989);transform-origin:0 0">No R interpreter defined: Many R related features like completion, code checking and help won't be available. You can set an interpreter under Preferences-&gt;Languages-&gt;R (7 minutes ago)</div>
<div class="t" style="left:1122px;top:710px;transform:scaleX(0.914);transform-origin:0 0">13:1</div>
<div class="t" style="left:1154px;top:710px;transform:scaleX(0.877);transform-origin:0 0">CRLF</div>
<div class="t" style="left:1202px;top:710px;transform:scaleX(0.976);transform-origin:0 0">UTF-8</div>
<div class="t" style="left:1254px;top:710px;transform:scaleX(0.94);transform-origin:0 0">4 spaces</div>
<svg class="a" style="left:1185px;top:712px" width="8" height="12"><path d="M1 4.5L4 1.5L7 4.5zM1 7.5L4 10.5L7 7.5z" fill="#9a9a9a"/></svg>
<svg class="a" style="left:1238px;top:712px" width="8" height="12"><path d="M1 4.5L4 1.5L7 4.5zM1 7.5L4 10.5L7 7.5z" fill="#9a9a9a"/></svg>
<svg class="a" style="left:1303px;top:712px" width="8" height="12"><path d="M1 4.5L4 1.5L7 4.5zM1 7.5L4 10.5L7 7.5z" fill="#9a9a9a"/></svg>
<svg class="a" style="left:1320px;top:711px" width="14" height="14"><path d="M1.8 5.2 V3.6 a2.6 2.6 0 0 1 5.2 0 V6" stroke="#afb1b3" stroke-width="1.5" fill="none"/><rect x="3.9" y="6.1" width="8.2" height="6" fill="#afb1b3"/></svg>
<svg class="a" style="left:1344px;top:710px" width="16" height="16"><g stroke="#9c9ea0" stroke-width="1" fill="none"><path d="M3.3 6.3 V3.3 Q3.3 1.5 5.3 1.5 H10 Q12 1.5 12 3.3 V6.3"/><path d="M1.3 6.3 H14"/><path d="M2.6 7.6 Q2.4 11 4.5 13 M12.7 7.6 Q12.9 11 10.8 13"/><path d="M4.8 13.2 Q5.2 10.8 7.6 11 Q10.1 10.8 10.5 13.2"/><path d="M2.5 14.6 H12.8"/><path d="M4.6 9 H6.3 M9 9 H10.7"/></g><rect x="7.2" y="2.7" width="1" height="1.8" fill="#9c9ea0"/></svg>


<!-- Figure window -->
<div class="a" style="left:768px;top:47px;width:577px;height:553px;background:#f2ba6b;border-right:1px solid #dba661;border-bottom:1px solid #dba661"></div>
<div class="a" style="left:775px;top:77px;width:563px;height:516px;background:#dca861"></div>
<div class="a" style="left:776px;top:78px;width:561px;height:514px;background:#fff"></div>
<div class="a" style="left:776px;top:558px;width:561px;height:34px;background:#f0f0f0"></div>
<div class="a" style="left:1293px;top:48px;width:45px;height:20px;background:#c75050"></div>
<div class="t" style="left:1031.5px;top:54px;font-size:15px;line-height:18px;color:#333;transform:scaleX(0.955);transform-origin:0 0">Figure 1</div>

<svg class="a" style="left:776px;top:78px" width="561" height="480" viewBox="776 78 561 480">
<line x1="895.5" y1="137" x2="895.5" y2="505" stroke="#b0b0b0" stroke-width="1"/>
<line x1="968.5" y1="137" x2="968.5" y2="505" stroke="#b0b0b0" stroke-width="1"/>
<line x1="1042.5" y1="137" x2="1042.5" y2="505" stroke="#b0b0b0" stroke-width="1"/>
<line x1="1115.5" y1="137" x2="1115.5" y2="505" stroke="#b0b0b0" stroke-width="1"/>
<line x1="1188.5" y1="137" x2="1188.5" y2="505" stroke="#b0b0b0" stroke-width="1"/>
<line x1="1261.5" y1="137" x2="1261.5" y2="505" stroke="#b0b0b0" stroke-width="1"/>
<line x1="847" y1="141.5" x2="1281" y2="141.5" stroke="#b0b0b0" stroke-width="1"/>
<line x1="847" y1="202.5" x2="1281" y2="202.5" stroke="#b0b0b0" stroke-width="1"/>
<line x1="847" y1="262.5" x2="1281" y2="262.5" stroke="#b0b0b0" stroke-width="1"/>
<line x1="847" y1="323.5" x2="1281" y2="323.5" stroke="#b0b0b0" stroke-width="1"/>
<line x1="847" y1="384.5" x2="1281" y2="384.5" stroke="#b0b0b0" stroke-width="1"/>
<line x1="847" y1="445.5" x2="1281" y2="445.5" stroke="#b0b0b0" stroke-width="1"/>
<polyline points="1261.8,488.7 1217.9,472.1 1174.0,449.9 1130.0,419.5 1086.1,377.2 1042.2,317.8 998.3,237.3 954.4,152.7 910.4,183.2 866.5,455.9" fill="none" stroke="#1f77b4" stroke-width="2.8" stroke-linejoin="miter" stroke-miterlimit="10" stroke-linecap="butt"/>
<rect x="846.5" y="136.5" width="435" height="369" fill="none" stroke="#000" stroke-width="1.1"/>
<line x1="895.5" y1="505.5" x2="895.5" y2="510" stroke="#000" stroke-width="1.1"/>
<text stroke="#000" stroke-width="0.12" x="895.5" y="526" font-size="14.1" text-anchor="middle" textLength="9.0" lengthAdjust="spacingAndGlyphs">5</text>
<line x1="968.5" y1="505.5" x2="968.5" y2="510" stroke="#000" stroke-width="1.1"/>
<text stroke="#000" stroke-width="0.12" x="968.5" y="526" font-size="14.1" text-anchor="middle" textLength="17.2" lengthAdjust="spacingAndGlyphs">10</text>
<line x1="1042.5" y1="505.5" x2="1042.5" y2="510" stroke="#000" stroke-width="1.1"/>
<text stroke="#000" stroke-width="0.12" x="1042.5" y="526" font-size="14.1" text-anchor="middle" textLength="17.2" lengthAdjust="spacingAndGlyphs">15</text>
<line x1="1115.5" y1="505.5" x2="1115.5" y2="510" stroke="#000" stroke-width="1.1"/>
<text stroke="#000" stroke-width="0.12" x="1115.5" y="526" font-size="14.1" text-anchor="middle" textLength="17.2" lengthAdjust="spacingAndGlyphs">20</text>
<line x1="1188.5" y1="505.5" x2="1188.5" y2="510" stroke="#000" stroke-width="1.1"/>
<text stroke="#000" stroke-width="0.12" x="1188.5" y="526" font-size="14.1" text-anchor="middle" textLength="17.2" lengthAdjust="spacingAndGlyphs">25</text>
<line x1="1261.5" y1="505.5" x2="1261.5" y2="510" stroke="#000" stroke-width="1.1"/>
<text stroke="#000" stroke-width="0.12" x="1261.5" y="526" font-size="14.1" text-anchor="middle" textLength="17.2" lengthAdjust="spacingAndGlyphs">30</text>
<line x1="841.5" y1="141.5" x2="846.5" y2="141.5" stroke="#000" stroke-width="1.1"/>
<text stroke="#000" stroke-width="0.12" x="837" y="146.10" font-size="14.1" text-anchor="end" textLength="30" lengthAdjust="spacingAndGlyphs">0.14</text>
<line x1="841.5" y1="202.5" x2="846.5" y2="202.5" stroke="#000" stroke-width="1.1"/>
<text stroke="#000" stroke-width="0.12" x="837" y="207.10" font-size="14.1" text-anchor="end" textLength="30" lengthAdjust="spacingAndGlyphs">0.12</text>
<line x1="841.5" y1="262.5" x2="846.5" y2="262.5" stroke="#000" stroke-width="1.1"/>
<text stroke="#000" stroke-width="0.12" x="837" y="267.10" font-size="14.1" text-anchor="end" textLength="30" lengthAdjust="spacingAndGlyphs">0.10</text>
<line x1="841.5" y1="323.5" x2="846.5" y2="323.5" stroke="#000" stroke-width="1.1"/>
<text stroke="#000" stroke-width="0.12" x="837" y="328.10" font-size="14.1" text-anchor="end" textLength="30" lengthAdjust="spacingAndGlyphs">0.08</text>
<line x1="841.5" y1="384.5" x2="846.5" y2="384.5" stroke="#000" stroke-width="1.1"/>
<text stroke="#000" stroke-width="0.12" x="837" y="389.10" font-size="14.1" text-anchor="end" textLength="30" lengthAdjust="spacingAndGlyphs">0.06</text>
<line x1="841.5" y1="445.5" x2="846.5" y2="445.5" stroke="#000" stroke-width="1.1"/>
<text stroke="#000" stroke-width="0.12" x="837" y="450.10" font-size="14.1" text-anchor="end" textLength="30" lengthAdjust="spacingAndGlyphs">0.04</text>
<text stroke="#000" stroke-width="0.12" x="1063.2" y="127" font-size="16.4" text-anchor="middle" textLength="187" lengthAdjust="spacingAndGlyphs">zone de garde secréte</text>
<text stroke="#000" stroke-width="0.12" x="1062.9" y="545" font-size="13.6" text-anchor="middle" textLength="182.5" lengthAdjust="spacingAndGlyphs">nombre d écoute illicite m</text>
<text stroke="#000" stroke-width="0.12" transform="translate(795.4 321.2) rotate(-90)" x="0" y="0" font-size="14.3" text-anchor="middle" textLength="197" lengthAdjust="spacingAndGlyphs">u sécurité throught capacity</text>
<rect x="1024.5" y="143.5" width="78.8" height="25" rx="2.5" fill="#fff" fill-opacity="0.8" stroke="#d0d0d0" stroke-width="1"/>
<line x1="1028.4" y1="154.4" x2="1058.7" y2="154.4" stroke="#1f77b4" stroke-width="2.8"/>
<text stroke="#000" stroke-width="0.12" x="1069" y="159" font-size="14.4" textLength="28.5" lengthAdjust="spacingAndGlyphs">g=1</text>
<path d="M839.7 128.9 C838.5 127.8 837.5 127.2 836 126.8 C834.5 126.5 833.2 126.1 832 125.2 C830 123.8 828.5 122.6 826.7 122.3 C824 121.5 821.5 121.4 819.3 121.5 C816.5 121.6 814.5 121.8 812.8 122.3 C810.5 123 809 123.8 807.9 124.8 C806 126 804.8 126.8 804.3 127.7 C803.5 129 803.2 130 803 131.3 C802.4 135 802 139 801.7 142.7 C801.5 145 801.3 146 801.1 146.8 C800.6 147.3 800.2 147.8 800.1 148.4 C800 151 800.1 155 800.1 157.4 C800.1 160 800.1 162 800.1 164 C800 190 799.7 215 799.8 230 C800.3 250 801.2 262 801.4 271 C801.8 285 803.7 300 803.7 311.5 C803.6 325 802 338 801.4 350 C799.8 370 798.5 390 798 403 C797.6 415 797.4 422 797.4 429.5 C797.4 436 798.5 440 798.5 442 C798.3 448 797.2 455 797.4 459.5 C797.8 466 799 469.5 800.6 471 C803 473.5 807 474.6 811.2 474.6 C816 474.6 821 472.5 825.3 471 C829 469.5 831 467.8 833.3 467.5 C835.5 466.5 836.5 464 837.7 462.2 C839 460 840.3 458.5 841.2 456.9" fill="none" stroke="#ff0000" stroke-width="1.9" stroke-linecap="round"/>
</svg><!-- figure titlebar icons -->
<svg class="a" style="left:778px;top:54px" width="16" height="16"><rect width="16" height="16" fill="#fff"/><circle cx="8.1" cy="7.8" r="7.1" stroke="#222" stroke-width="1.3" fill="none" stroke-dasharray="2.2 0.8"/><path d="M8.2 8 L3.6 2.4 L6 1.6z" fill="#ff6a10"/><path d="M8.2 8 L12.6 12.2 L11.6 13z" fill="#f0600a"/><path d="M8.2 8 L1.8 6 L1.8 10z" fill="#f5c000"/><path d="M8.2 8 L10.2 2.8 L11.6 3.4z" fill="#a8d860"/><path d="M8.2 8 L7 12.6 L9.2 12.6z" fill="#70d070"/><circle cx="8.2" cy="8" r="1" fill="#203040"/><circle cx="5.3" cy="9.3" r="0.6" fill="#30a0a0"/></svg>
<div class="a" style="left:1249px;top:60px;width:8px;height:2px;background:#111"></div>
<div class="a" style="left:1275px;top:54px;width:10px;height:8px;border:1px solid #111;border-top-width:2px"></div>
<svg class="a" style="left:1311px;top:54px" width="10" height="10"><path d="M1 1L9 9M9 1L1 9" stroke="#fff" stroke-width="1.6"/></svg>
<!-- toolbar buttons -->
<div class="btn" style="left:778px"></div><div class="btn" style="left:808px"></div><div class="btn" style="left:838px"></div>
<div class="a" style="left:873px;top:563px;width:1px;height:25px;background:#a0a0a0"></div>
<div class="btn" style="left:879px"></div><div class="btn" style="left:909px"></div><div class="btn" style="left:939px"></div>
<div class="a" style="left:974px;top:563px;width:1px;height:25px;background:#a0a0a0"></div>
<div class="btn" style="left:980px"></div>
<svg class="a" style="left:776px;top:558px" width="250" height="34" viewBox="776 558 250 34">
<path d="M783.5 577.5 L793.2 569.8 L803 577.5" fill="none" stroke="#000" stroke-width="1.8" stroke-linecap="round" stroke-linejoin="miter"/>
<rect x="797.6" y="569.3" width="2.6" height="4.5" fill="#000"/>
<path d="M785.6 578 L793.2 572.3 L800.6 578 V585.5 H795.5 V581 H791 V585.5 H785.6z" fill="#000"/>
<path d="M823.8 567.5 L816.8 575.5 L823.8 583.5 M817 575.5 H831.5" fill="none" stroke="#000" stroke-width="4" stroke-linecap="round" stroke-linejoin="round"/>
<path d="M852.4 567.5 L859.7 575.5 L852.4 583.5 M859.5 575.5 H844.5" fill="none" stroke="#000" stroke-width="4" stroke-linecap="round" stroke-linejoin="round"/>
<path d="M894.2 564 L898.3 568.3 H895.5 V574.2 H901.5 V571.3 L905.8 575.5 L901.5 579.7 V576.8 H895.5 V582.7 H898.3 L894.2 587 L890.1 582.7 H892.9 V576.8 H886.9 V579.7 L882.6 575.5 L886.9 571.3 V574.2 H892.9 V568.3 H890.1z" fill="#000"/>
<circle cx="922.6" cy="573.8" r="7.6" fill="none" stroke="#000" stroke-width="2.8"/>
<path d="M927.8 579.2 L933.5 584.8" stroke="#000" stroke-width="3.2" stroke-linecap="round"/>
<g stroke="#000" stroke-width="1.4"><path d="M944.7 569.8 H963.9 M944.7 576.3 H963.9 M944.7 582.9 H963.9"/></g>
<g fill="#000"><rect x="947.8" y="567.3" width="4.2" height="5.2" rx="0.6"/><rect x="955.9" y="573.7" width="4.2" height="5.2" rx="0.6"/><rect x="949.8" y="580.3" width="4.2" height="5.2" rx="0.6"/></g>
<path d="M986.8 566.7 H999.8 L1003.6 570.6 V584.3 H986.8z" fill="none" stroke="#000" stroke-width="2.2" stroke-linejoin="round"/>
<rect x="988.5" y="566.5" width="9.5" height="6" fill="#000"/><rect x="993.2" y="567.5" width="2.2" height="3.6" fill="#f7f7f7"/>
<rect x="989.8" y="577" width="10.8" height="7" fill="none" stroke="#000" stroke-width="2"/>
</svg>
</body></html>
